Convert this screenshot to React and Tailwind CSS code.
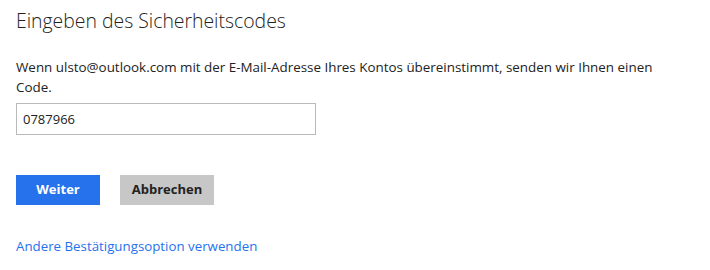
import React, { useState } from "react";

function App() {
  const [code, setCode] = useState("0787966");

  return (
    <div className="w-[710px] h-[270px] bg-white px-4 text-[#222] font-['Open_Sans',sans-serif]">
      {/* Heading */}
      <h1 className="pt-[6px] text-[19.4px] leading-[30px] font-light text-[#222]">
        Eingeben des Sicherheitscodes
      </h1>

      {/* Description */}
      <p className="mt-[21px] text-[13.4px] leading-[20px] w-[660px]">
        Wenn ulsto@outlook.com mit der E-Mail-Adresse Ihres Kontos übereinstimmt, senden wir Ihnen einen Code.
      </p>

      {/* Code input */}
      <input
        type="text"
        value={code}
        onChange={(e) => setCode(e.target.value)}
        className="mt-[6px] block w-[300px] h-[32px] border border-[#bababa] px-[6px] text-[13px] text-[#222] outline-none"
      />

      {/* Buttons */}
      <div className="mt-[40px] flex gap-[20px]">
        <button className="w-[84px] h-[30px] bg-[#2672ec] text-white text-[13px] font-bold">
          Weiter
        </button>
        <button className="w-[94px] h-[30px] bg-[#c7c7c7] text-[#222] text-[13px] font-bold">
          Abbrechen
        </button>
      </div>

      {/* Alternative option */}
      <a href="#" className="mt-[31px] inline-block text-[13.3px] leading-[20px] text-[#2672ec]">
        Andere Bestätigungsoption verwenden
      </a>
    </div>
  );
}

export default App;
